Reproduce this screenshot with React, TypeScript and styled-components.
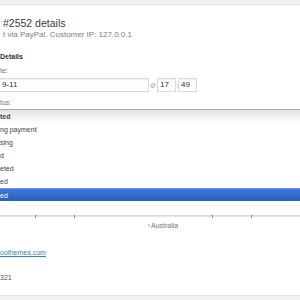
import React from "react";
import styled, { createGlobalStyle } from "styled-components";

const GlobalStyle = createGlobalStyle`
  html, body { margin: 0; padding: 0; background: #fff; }
  body { font-family: "Liberation Sans", Arial, sans-serif; overflow: hidden; }
  * { box-sizing: border-box; }
`;

const Page = styled.div`
  width: 300px;
  height: 300px;
  display: flex;
  flex-direction: column;
  overflow: hidden;
  background: #fff;
`;

const TopBar = styled.div`
  height: 5px;
  flex: none;
  background: #f1f1f1;
  border-bottom: 1px solid #e2e2e2;
`;

const BottomBar = styled.div`
  height: 5px;
  flex: none;
  background: #f1f1f1;
  border-top: 1px solid #e6e6e6;
`;

const Main = styled.div`
  flex: 1;
  display: flex;
  flex-direction: column;
  min-height: 0;
`;

const Title = styled.h2`
  margin: 12px 0 0 3px;
  font-size: 10.5px;
  line-height: 12px;
  font-weight: normal;
  color: #3c3c3c;
  white-space: nowrap;
`;

const Subtitle = styled.p`
  margin: 1px 0 0 3px;
  font-size: 8px;
  line-height: 10px;
  color: #808080;
  white-space: nowrap;
`;

const SectionHeading = styled.h4`
  margin: 12px 0 0 0;
  font-size: 7px;
  line-height: 9px;
  font-weight: bold;
  color: #333;
`;

const Label = styled.div<{ $mt: number }>`
  margin-top: ${(p) => p.$mt}px;
  font-size: 7px;
  line-height: 9px;
  color: #777;
`;

const DateRow = styled.div`
  display: flex;
  align-items: center;
  margin-top: 3px;
  height: 14px;
`;

const Field = styled.div<{ $w: number }>`
  width: ${(p) => p.$w}px;
  height: 14px;
  flex: none;
  border: 1px solid #dcdcdc;
  box-shadow: inset 0 1px 2px rgba(0, 0, 0, 0.07);
  font-size: 8px;
  line-height: 12px;
  color: #333;
  padding-left: 2px;
  background: #fff;
`;

const DateField = styled(Field)`
  margin-left: -2px;
  padding-left: 3px;
`;

const At = styled.span`
  font-size: 6px;
  color: #999;
  margin: 0 1px;
  width: 6px;
`;

const Colon = styled.span`
  font-size: 7px;
  color: #999;
  width: 2px;
  text-align: center;
`;

const Dropdown = styled.div`
  margin-top: 2px;
  width: 310px;
  border-top: 1px solid #aaa;
  display: flex;
  flex-direction: column;
`;

const DropHeader = styled.div`
  height: 13px;
  line-height: 13px;
  font-size: 7px;
  font-weight: bold;
  color: #444;
  background: linear-gradient(#e6e6e6 10%, #f6f6f6 70%, #fff 100%);
`;

const Option = styled.div<{ $active?: boolean }>`
  height: 13px;
  line-height: 13px;
  font-size: 7px;
  color: ${(p) => (p.$active ? "#fff" : "#444")};
  background: ${(p) =>
    p.$active ? "linear-gradient(#3875d7 20%, #2a62bc 90%)" : "transparent"};
  border-top: ${(p) => (p.$active ? "1px solid #6d9be3" : "none")};
`;

const Rule = styled.div`
  position: relative;
  margin-top: 14px;
  height: 2px;
  background: linear-gradient(#d6d6d6, #ececec);
`;

const Tick = styled.span<{ $left: number }>`
  position: absolute;
  left: ${(p) => p.$left}px;
  top: 0;
  width: 1px;
  height: 3px;
  background: #888;
`;

const Columns = styled.div`
  display: grid;
  grid-template-columns: 151px 149px;
  margin-top: 4px;
`;

const Column = styled.div`
  display: flex;
  flex-direction: column;
`;

const EditRow = styled.div`
  height: 9px;
  display: flex;
  justify-content: flex-end;
  padding-top: 3px;
  padding-right: 1px;
`;

const EditMark = styled.span`
  width: 2px;
  height: 3px;
  background: #ddd3ad;
`;

const Country = styled.div`
  font-size: 7px;
  line-height: 9px;
  color: #777;
`;

const Link = styled.a`
  margin-top: 18px;
  font-size: 7px;
  line-height: 9px;
  color: #2a86c0;
  text-decoration: underline;
`;

const Phone = styled.div`
  margin-top: 16px;
  font-size: 7px;
  line-height: 9px;
  color: #555;
`;

export default function App() {
  return (
    <>
      <GlobalStyle />
      <Page>
        <TopBar />
        <Main>
          <Title>#2552 details</Title>
          <Subtitle>t via PayPal. Customer IP: 127.0.0.1</Subtitle>
          <SectionHeading>Details</SectionHeading>
          <Label $mt={5}>te:</Label>
          <DateRow>
            <DateField $w={151}>9-11</DateField>
            <At>@</At>
            <Field $w={19}>17</Field>
            <Colon>:</Colon>
            <Field $w={19}>49</Field>
          </DateRow>
          <Label $mt={6}>tus:</Label>
          <Dropdown>
            <DropHeader>ted</DropHeader>
            <Option>ng payment</Option>
            <Option>sing</Option>
            <Option>d</Option>
            <Option>eted</Option>
            <Option>ed</Option>
            <Option $active>ed</Option>
          </Dropdown>
          <Rule>
            <Tick $left={35} />
            <Tick $left={74} />
            <Tick $left={212} />
            <Tick $left={251} />
          </Rule>
          <Columns>
            <Column>
              <EditRow>
                <EditMark />
              </EditRow>
              <Link href="#">oothemes.com</Link>
              <Phone>321</Phone>
            </Column>
            <Column>
              <Country>Australia</Country>
            </Column>
          </Columns>
        </Main>
        <BottomBar />
      </Page>
    </>
  );
}
